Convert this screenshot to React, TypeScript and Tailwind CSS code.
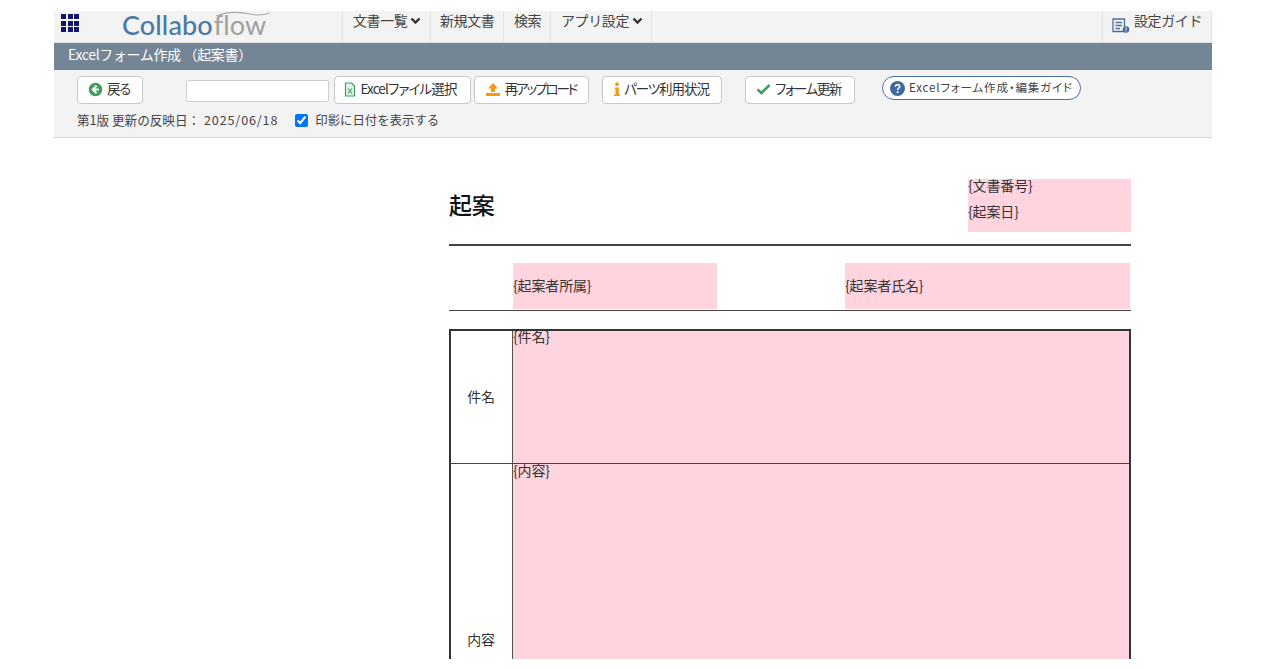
import React from "react";

function Btn({ icon, label, className }: { icon: React.ReactNode; label: string; className: string }) {
  return (
    <button className={`h-[28px] flex items-center justify-center gap-[4px] rounded-[4px] border border-[#c8c8c8] bg-white text-[13.5px] text-[#333] whitespace-nowrap [font-feature-settings:'palt'] ${className}`}>
      {icon}
      <span className="-translate-y-[2.5px]">{label}</span>
    </button>
  );
}

function NavItem({ label, chevron, className }: { label: string; chevron?: boolean; className: string }) {
  return (
    <div className={`h-full flex items-start border-r border-[#e2e2e2] text-[14px] leading-[19px] text-[#444] tracking-[-0.4px] ${className}`}>
      <span>{label}</span>
      {chevron && (
        <svg width="11" height="8" viewBox="0 0 11 8" className="ml-[3px] mt-[6px]">
          <path d="M1.5 1.5 5.5 5.5 9.5 1.5" fill="none" stroke="#333" strokeWidth="2.4" />
        </svg>
      )}
    </div>
  );
}

export default function App() {
  return (
    <div className="w-[1280px] h-[670px] overflow-hidden bg-white py-[11px] px-[54px] [font-family:'Noto_Sans_CJK_JP',sans-serif]">
      <div className="w-[1158px] h-[648px]">
        {/* top nav */}
        <div className="h-[31px] bg-[#f3f3f3] flex">
          <div className="w-[289px] shrink-0 h-full flex items-start border-r border-[#e2e2e2]">
            <div className="ml-[7px] mt-[3px] grid grid-cols-3 gap-[1.5px] w-[18px]">
              {Array.from({ length: 9 }).map((_, i) => (
                <div key={i} className="w-[5px] h-[5px] bg-[#14146e]" />
              ))}
            </div>
            <div className="relative ml-[43px] flex items-baseline text-[27px] leading-[27px] tracking-[0.1px] [font-family:'Lato',sans-serif]">
              <span className="text-[#4a78a8] font-medium">Collabo</span>
              <span className="text-[#a0a0a0] ml-[1px]">flow</span>
              <svg width="60" height="8" viewBox="0 0 60 8" className="absolute left-[92px] top-[0px]">
                <path d="M2 5C14 0 28 1 36 3 44 5 50 4 56 2" fill="none" stroke="#a8a8a8" strokeWidth="1.2" />
              </svg>
            </div>
          </div>
          <NavItem label="文書一覧" chevron className="w-[88px] pl-[10px]" />
          <NavItem label="新規文書" className="w-[73px] pl-[9px]" />
          <NavItem label="検索" className="w-[47px] pl-[10px]" />
          <NavItem label="アプリ設定" chevron className="w-[101px] pl-[10px]" />
          <div className="flex-1" />
          <div className="w-[110px] h-full border-l border-r border-[#e2e2e2] flex items-start pl-[9px] text-[14px] leading-[19px] text-[#444] tracking-[-0.4px]">
            <svg width="18" height="15" viewBox="0 0 18 15" className="mt-[7px] mr-[4px] shrink-0">
              <path d="M1 1h11.5v12.5H1z M3.5 4.5h6.5 M3.5 7.5h6.5 M3.5 10.5h4.5" fill="none" stroke="#4a6f9c" strokeWidth="1.3" />
              <circle cx="14" cy="11.5" r="3.3" fill="#4a6f9c" />
              <rect x="13.5" y="9.5" width="1" height="2.3" fill="#fff" />
              <rect x="13.5" y="12.4" width="1" height="1" fill="#fff" />
            </svg>
            <span>設定ガイド</span>
          </div>
        </div>

        {/* title bar */}
        <div className="h-[28px] bg-[#748596] border-t border-[#e0e0e0] flex items-center pl-[14px] pb-[5px] text-[14px] text-white tracking-[-0.35px] whitespace-pre">
          Excelフォーム作成 （起案書）
        </div>

        {/* toolbar */}
        <div className="h-[68px] bg-[#f3f3f3] border-b border-[#d4d4d4]">
          <div className="flex items-start pt-[6px] h-[36px]">
            <Btn
              className="ml-[23px] w-[66px] tracking-[-1.2px] pr-[2px]"
              label="戻る"
              icon={
                <svg width="15" height="15" viewBox="0 0 15 15" className="-translate-y-[1px]">
                  <circle cx="7.5" cy="7.5" r="6.8" fill="#3f9e5b" />
                  <path d="M8.5 3.8 4.8 7.5l3.7 3.7M5.2 7.5h5.6" fill="none" stroke="#fff" strokeWidth="2" />
                </svg>
              }
            />
            <input className="ml-[43px] mt-[4px] w-[143px] h-[22px] bg-white border border-[#d0d0d0] rounded-[2px]" />
            <Btn
              className="ml-[5px] w-[137px] tracking-[-0.85px] pr-[4px]"
              label="Excelファイル選択"
              icon={
                <svg width="12" height="15" viewBox="0 0 12 15" className="-translate-y-[1px]">
                  <path d="M1.5 1h6l3 3v10h-9z" fill="#e4f4e8" stroke="#3f9e5b" strokeWidth="1.2" />
                  <path d="M4 6.5 8 11.5M8 6.5 4 11.5" stroke="#3f9e5b" strokeWidth="1.2" />
                </svg>
              }
            />
            <Btn
              className="ml-[3px] w-[115px] tracking-[-2.1px] pr-[2px]"
              label="再アップロード"
              icon={
                <svg width="16" height="15" viewBox="0 0 16 15" className="-translate-y-[1px]">
                  <path d="M8 1 13 6.5H10V10H6V6.5H3z" fill="#f39c12" />
                  <path d="M1 11h14v3H1z" fill="#f39c12" />
                </svg>
              }
            />
            <Btn
              className="ml-[13px] w-[120px] tracking-[-1.05px] pr-[1px]"
              label="パーツ利用状況"
              icon={
                <svg width="6" height="15" viewBox="0 0 6 15" className="-translate-y-[1px]">
                  <circle cx="3" cy="2.2" r="1.9" fill="#f39c12" />
                  <path d="M.8 5.5h4V12.5H6V14H0V12.5h1.5V7H.8z" fill="#f39c12" />
                </svg>
              }
            />
            <Btn
              className="ml-[23px] w-[110px] tracking-[-1.4px] pr-[3px]"
              label="フォーム更新"
              icon={
                <svg width="15" height="12" viewBox="0 0 15 12" className="-translate-y-[1px]">
                  <path d="M1.5 6.5 5.5 10 13.5 2" fill="none" stroke="#3f9e5b" strokeWidth="2.6" />
                </svg>
              }
            />
            <div className="ml-[27px] h-[24px] w-[199px] rounded-full border border-[#4a6f9c] bg-white flex items-center pl-[7px] text-[11.5px] text-[#444] whitespace-nowrap">
              <svg width="15" height="15" viewBox="0 0 15 15" className="mr-[4px] shrink-0">
                <circle cx="7.5" cy="7.5" r="7.5" fill="#3d6a9e" />
                <path d="M5.3 5.8C5.4 3 9.8 3 9.8 5.6 9.8 7.2 7.6 7.3 7.6 9" fill="none" stroke="#fff" strokeWidth="1.6" />
                <rect x="6.7" y="10.2" width="1.8" height="1.8" fill="#fff" />
              </svg>
              <span className="[font-feature-settings:'palt'] tracking-[0.85px]">Excelフォーム作成・編集ガイド</span>
            </div>
          </div>
          <div className="flex items-center h-[24px] pl-[23px] pt-[5px] text-[12.6px] text-[#444] whitespace-pre">
            <span>第1版 更新の反映日： </span>
            <span className="ml-[1px] tracking-[0.85px]">2025/06/18</span>
            <input type="checkbox" defaultChecked className="ml-[17px] w-[13px] h-[13px] accent-[#0075ff]" />
            <span className="ml-[7px] text-[12.4px]">印影に日付を表示する</span>
          </div>
        </div>

        {/* form */}
        <div className="h-[521px] overflow-hidden">
          <div className="ml-[395px] w-[682px] text-[14px] tracking-[-0.15px] text-[#333]">
            <div className="pt-[41px] h-[108px] flex border-b-2 border-[#444]">
              <div className="flex-1 pt-[8px] text-[23px] leading-[34px] font-medium text-[#111]">起案</div>
              <div className="w-[163px] h-[53px] bg-[#ffd4df]">
                <div className="h-[27px] leading-[13px]">{"{文書番号}"}</div>
                <div className="leading-[11px]">{"{起案日}"}</div>
              </div>
            </div>
            <div className="mt-[17px] h-[48px] flex border-b border-[#444]">
              <div className="w-[64px]" />
              <div className="w-[204px] h-[46px] bg-[#ffd4df] flex items-end pb-[14px] leading-[20px]">{"{起案者所属}"}</div>
              <div className="w-[128px]" />
              <div className="w-[285px] h-[46px] bg-[#ffd4df] flex items-end pb-[14px] leading-[20px]">{"{起案者氏名}"}</div>
            </div>
            <div className="mt-[18px] border-2 border-[#333] border-b-0">
              <div className="h-[133px] flex border-b border-[#444]">
                <div className="w-[62px] border-r border-[#555] flex items-center justify-center pr-[1px] pb-[2px]">件名</div>
                <div className="flex-1 bg-[#ffd4df] leading-[11px]">{"{件名}"}</div>
              </div>
              <div className="h-[195px] flex">
                <div className="w-[62px] border-r border-[#555] flex items-end justify-center pr-[1px] pb-[10px]"><span className="leading-[20px]">内容</span></div>
                <div className="flex-1 bg-[#ffd4df] leading-[12px]">{"{内容}"}</div>
              </div>
            </div>
          </div>
        </div>
      </div>
    </div>
  );
}
